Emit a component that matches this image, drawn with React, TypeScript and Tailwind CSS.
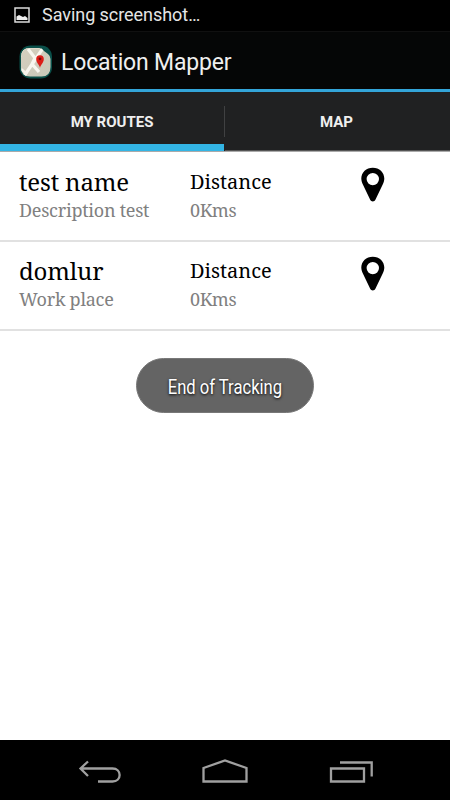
const routes = [
  { name: "test name", description: "Description test", distance: "0Kms" },
  { name: "domlur", description: "Work place", distance: "0Kms" },
];

function AppIcon() {
  return (
    <svg width="34" height="34" viewBox="0 0 34 34" className="shrink-0">
      <defs>
        <linearGradient id="paper" x1="0" y1="0" x2="1" y2="1">
          <stop offset="0" stopColor="#d6cfbf" />
          <stop offset="1" stopColor="#c8c8b8" />
        </linearGradient>
        <clipPath id="tile">
          <path d="M11 3h9q3 0 5 3l4 3q2.500 2 2.500 5v8q0 9.500-9 9.500H11q-9 0-9-9V12q0-9 9-9z" />
        </clipPath>
      </defs>
      <rect x="0.500" y="0.500" width="32.500" height="33" rx="11" fill="#0a4f49" />
      <g clipPath="url(#tile)">
        <rect width="34" height="34" fill="url(#paper)" />
        <path d="M5 31L18 12L24 3M9 4L16 13L13 19L20 27" stroke="#f8f6ef" strokeWidth="3.200" fill="none" />
        <path d="M2 24L8 29" stroke="#f6f3ea" strokeWidth="2.500" />
        <path d="M2 12q0-9 9-9h10" stroke="#ece6d5" fill="none" />
      </g>
      <path d="M21 23c-.5-3.500-3.800-5-3.800-9a3.800 3.800 0 0 1 7.600 0c0 4-3.300 5.500-3.800 9z" fill="#dc1c17" />
      <circle cx="21" cy="13.800" r="1.400" fill="#6f0d0b" />
    </svg>
  );
}

function PinIcon() {
  return (
    <svg width="24" height="36" viewBox="0 0 24 36">
      <path
        fillRule="evenodd"
        d="M11.800.700C5.300.700.300 5.400.300 11.600c0 2.200.7 4.200 1.700 6.200l7.200 15c1 2.300 4.200 2.300 5.200 0l7.200-15c1-2 1.700-4 1.700-6.200C23.300 5.400 18.300.700 11.800.700zm0 5.200a6.200 6.200 0 1 1 0 12.400 6.200 6.200 0 0 1 0-12.400z"
      />
    </svg>
  );
}

export default function App() {
  return (
    <div className="flex h-[800px] w-[450px] flex-col overflow-hidden bg-white font-['Roboto',sans-serif]">
      {/* Status bar */}
      <div className="flex h-8 shrink-0 items-center border-b border-[#101010] bg-black pb-px pl-3.5 text-[#e5e5e5]">
        <svg width="17" height="17" viewBox="0 0 17 17">
          <path d="M1 1h14v14H1z" fill="none" stroke="#dcdcdc" strokeWidth="1.500" />
          <path d="M2.500 13V9.500L5 8L7 9L9 10L11 9L13.500 11V13z" fill="#f0f0f0" />
        </svg>
        <span className="ml-[11px] text-[18px] leading-6 tracking-[-0.05px]">Saving screenshot…</span>
      </div>

      {/* Action bar */}
      <header className="flex h-15 shrink-0 items-center border-b-[3px] border-[#33a5d9] bg-[#050606] pl-[19px] pt-[2px]">
        <AppIcon />
        <h1 className="ml-2 pt-[2px] text-[23px] leading-7 tracking-[-0.18px] text-[#efefef]">Location Mapper</h1>
      </header>

      {/* Tabs */}
      <nav className="flex h-[60px] shrink-0 border-b border-[#aaa] bg-[#202122] text-[15px] font-bold text-[#efefef]">
        <div className="flex h-full w-56 items-center justify-center border-b-[7px] border-[#33b5e5] pt-[9px]">
          MY ROUTES
        </div>
        <div className="mt-3.5 h-[31px] w-px bg-[#404142]" />
        <div className="flex flex-1 items-center justify-center border-b border-[#555] pr-[2px] pt-[3px]">
          MAP
        </div>
      </nav>

      {/* Routes */}
      <main className="flex-1 font-['Droid_Serif','Noto_Serif','DejaVu_Serif_Condensed','DejaVu_Serif',serif]">
        {routes.map((route) => (
          <div key={route.name} className="flex h-[89px] border-b-2 border-[#e1e1e1] pl-[19px] pt-3.5 first:h-[90px] first:pt-[15px]">
            <div className="w-[171px] whitespace-nowrap">
              <p className="text-[24px] leading-[30px] tracking-[-0.15px]">{route.name}</p>
              <p className="text-[18px] leading-[26px] tracking-[-0.25px] text-[#808080]">{route.description}</p>
            </div>
            <div className="w-[171px] whitespace-nowrap">
              <p className="text-[20px] leading-[30px]">Distance</p>
              <p className="text-[18px] leading-[26px] tracking-[-0.4px] text-[#808080]">{route.distance}</p>
            </div>
            <PinIcon />
          </div>
        ))}

        {/* Toast */}
        <div className="mx-auto mt-[27px] flex h-[55px] w-[178px] items-center justify-center rounded-full border border-[#787878] bg-[#646464] pt-[3px]">
          <span className="inline-block scale-x-[0.83] whitespace-nowrap font-['Roboto',sans-serif] text-[20px] text-white [text-shadow:0_1px_3px_#000]">
            End of Tracking
          </span>
        </div>
      </main>

      {/* Navigation bar */}
      <footer className="flex h-15 shrink-0 justify-center bg-black pt-[18px]">
        <svg width="296" height="28" viewBox="77 758 296 28" fill="none" stroke="#a0a0a0" strokeWidth="2.300">
          <path d="M88 761.500L80.500 768.500L88 776M81 768.500H112.500C122 768.500 122 781.500 112.500 781.500H98" />
          <path d="M203.500 768L225 760.500L246.500 768V781.500H203.500z" />
          <path d="M331 768.500H364V781.500H331zM340 762.500H371.700V776.500" />
        </svg>
      </footer>
    </div>
  );
}
